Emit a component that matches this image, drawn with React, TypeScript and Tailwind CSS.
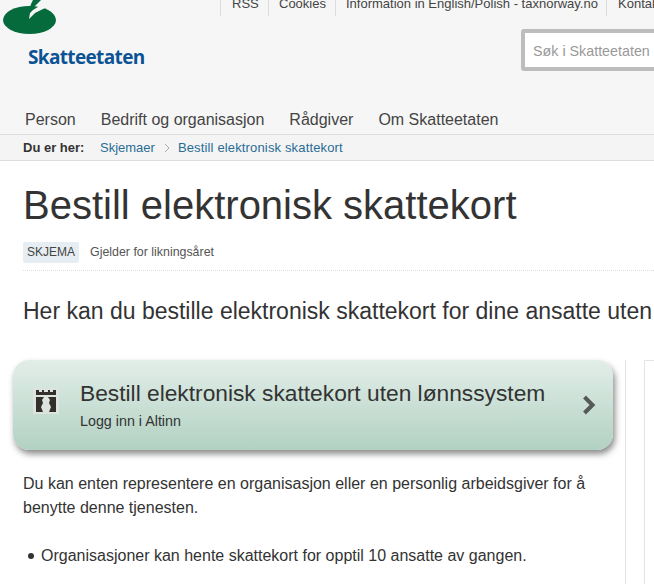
import React from "react";

function Logo() {
  return (
    <svg width="60" height="36" viewBox="0 0 60 36" className="absolute left-0 top-0">
      <ellipse cx="29.5" cy="20" rx="26.5" ry="14" fill="#056a3c" />
      <path d="M29 10 L31 4 L33 0 L41 0 L36 5 L32 9 L30 12 Z" fill="#056a3c" />
      <path d="M29 19 L30 13 L33 10 L41 5 L45 8 L35 13 Z" fill="#f7f7f7" />
    </svg>
  );
}

function TopLink({ children, w, pl }: { children: React.ReactNode; w: string; pl: string }) {
  return (
    <div className={`${w} ${pl} h-[16px] shrink-0 border-r border-[#dddddd] text-[13px] leading-[8px] text-[#444444] whitespace-nowrap`}>
      {children}
    </div>
  );
}

function Fort() {
  return (
    <div className="w-[26px] h-[26px] mb-[8px] bg-[#dde3de] flex items-center justify-center shrink-0">
      <svg width="26" height="26" viewBox="0 0 26 26">
        <path
          d="M3 2 H6 V4 H9 V2 H11 V4 H15 V2 H17 V4 H20 V2 H23 V7 H3 Z M3 9 H11 L9 12 L10 15 L8 19 L10 24 H3 Z M23 9 H15 L17 12 L16 15 L18 19 L16 24 H23 Z"
          fill="#33302c"
        />
      </svg>
    </div>
  );
}

export default function App() {
  return (
    <div className="w-[654px] h-[584px] overflow-hidden bg-white font-['Liberation_Sans',Arial,sans-serif] text-[#333333]">
      <header className="relative h-[134px] bg-[#f6f6f6]">
        <Logo />
        <div className="absolute left-[220px] top-0 flex">
          <div className="w-0 h-[16px] border-l border-[#dddddd]" />
          <TopLink w="w-[48px]" pl="pl-[11px]">RSS</TopLink>
          <TopLink w="w-[67px]" pl="pl-[10px]">Cookies</TopLink>
          <TopLink w="w-[271px]" pl="pl-[10px]">Information in English/Polish - taxnorway.no</TopLink>
          <TopLink w="w-[60px]" pl="pl-[11px]">Kontakt</TopLink>
        </div>
        <div className="absolute left-[28px] top-[45px] text-[19px] leading-[24px] font-bold text-[#0b5394] font-['Open_Sans',sans-serif] tracking-[-0.65px]">
          Skatteetaten
        </div>
        <div className="absolute left-[521px] top-[29px] w-[160px] h-[42px] border-[4px] border-[#bdbdbd] rounded-[3px] bg-white pl-[8px] text-[14.3px] leading-[37px] text-[#999999] whitespace-nowrap">
          Søk i Skatteetaten
        </div>
        <nav className="absolute left-[25px] top-[110px] flex gap-[25px] text-[16px] leading-[20px] text-[#444444] whitespace-nowrap">
          <span>Person</span>
          <span>Bedrift og organisasjon</span>
          <span>Rådgiver</span>
          <span>Om Skatteetaten</span>
        </nav>
      </header>

      <div className="h-[27px] bg-[#f4f4f4] border-t border-b border-[#dddddd] flex items-center pl-[23px] text-[13px] whitespace-nowrap">
        <span className="font-bold text-[#333333] w-[77px]">Du er her:</span>
        <span className="text-[#2a6c94]">Skjemaer</span>
        <svg width="8" height="10" viewBox="0 0 8 10" className="ml-[8px] mr-[7px]">
          <path d="M2 1 L6 5 L2 9" fill="none" stroke="#aaaaaa" strokeWidth="1" />
        </svg>
        <span className="text-[#2a6c94] tracking-[0.15px]">Bestill elektronisk skattekort</span>
      </div>

      <main className="pl-[23px]">
        <h1 className="mt-[20px] text-[40px] leading-[48px] text-[#333333] whitespace-nowrap">Bestill elektronisk skattekort</h1>
        <div className="mt-[12px] flex items-center h-[22px] whitespace-nowrap">
          <span className="h-[21px] w-[56px] bg-[#e6eef3] rounded-[2px] text-center text-[12px] leading-[21px] text-[#444444]">SKJEMA</span>
          <span className="ml-[11px] text-[12.4px] text-[#555555]">Gjelder for likningsåret</span>
        </div>
        <div className="mt-[7px] border-t border-dotted border-[#dddddd]" />
        <p className="mt-[27px] text-[23px] leading-[26px] text-[#333333] whitespace-nowrap">
          Her kan du bestille elektronisk skattekort for dine ansatte uten lønnssystem
        </p>

        <div className="relative">
          <div className="absolute left-[602px] top-0 w-px h-[300px] bg-[#e2e2e2]" />
          <div className="absolute left-[621px] top-0 w-[40px] h-[300px] border border-[#e4e4e4]" />
          <div className="-ml-[10px] mt-[36px] w-[600px] h-[90px] rounded-[16px] bg-gradient-to-b from-[#e2eee8] to-[#b2d1c3] shadow-[2px_4px_6px_rgba(60,60,60,0.6)] flex items-center pl-[20px] pr-[16px]">
            <Fort />
            <div className="ml-[21px] flex-1 -mt-[2px]">
              <div className="text-[22.75px] leading-[30px] text-[#333333] whitespace-nowrap">Bestill elektronisk skattekort uten lønnssystem</div>
              <div className="mt-[3px] text-[14.3px] leading-[20px] text-[#333333]">Logg inn i Altinn</div>
            </div>
            <svg width="16" height="20" viewBox="0 0 16 20">
              <path d="M3.5 2 L11.5 10 L3.5 18" fill="none" stroke="#555a57" strokeWidth="4" />
            </svg>
          </div>
          <p className="mt-[22px] w-[580px] text-[16px] leading-[24px] text-[#333333]">
            Du kan enten representere en organisasjon eller en personlig arbeidsgiver for å benytte denne tjenesten.
          </p>
          <div className="mt-[24px] flex items-center text-[16px] leading-[24px] whitespace-nowrap">
            <span className="w-[6px] h-[6px] rounded-full bg-[#333333] ml-[5px] mr-[7px]" />
            Organisasjoner kan hente skattekort for opptil 10 ansatte av gangen.
          </div>
        </div>
      </main>
    </div>
  );
}
